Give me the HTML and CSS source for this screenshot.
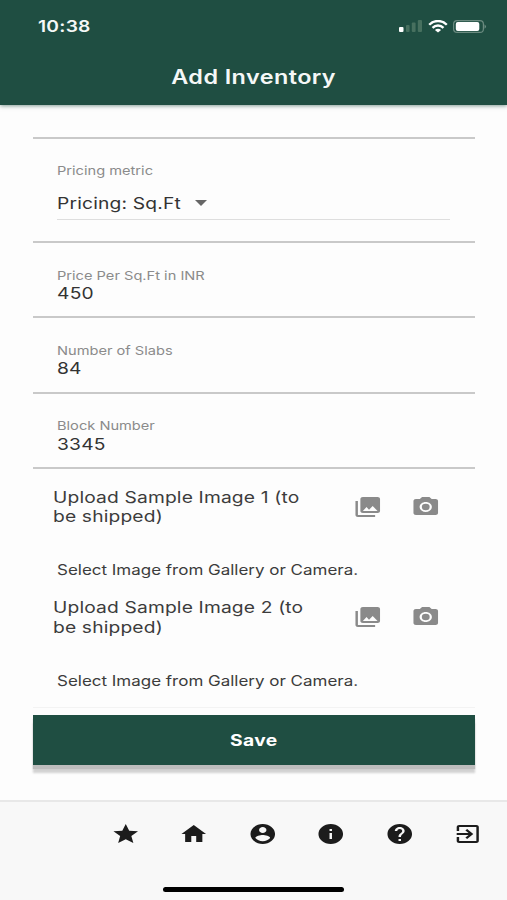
FILE: index.html
```
<!DOCTYPE html>
<html lang="en">
<head>
<meta charset="utf-8">
<title>Add Inventory</title>
<link rel="stylesheet" href="styles.css">
</head>
<body>
<svg width="0" height="0" class="defs" aria-hidden="true">
  <symbol id="gallery" viewBox="0 0 24 24" preserveAspectRatio="none"><path d="M22 16V4c0-1.100-.9-2-2-2H8c-1.100 0-2 .9-2 2v12c0 1.100.9 2 2 2h12c1.100 0 2-.9 2-2zm-11-4l2.030 2.710L16 11l4 5H8l3-4zM2 6v14c0 1.100.9 2 2 2h14v-2H4V6H2z"/></symbol>
  <symbol id="camera" viewBox="0 0 24 24" preserveAspectRatio="none"><circle cx="12" cy="12" r="3.200"/><path d="M9 2L7.170 4H4c-1.100 0-2 .9-2 2v12c0 1.100.9 2 2 2h16c1.100 0 2-.9 2-2V6c0-1.100-.9-2-2-2h-3.170L15 2H9zm3 15c-2.760 0-5-2.240-5-5s2.240-5 5-5 5 2.240 5 5-2.240 5-5 5z"/></symbol>
</svg>
<header class="header">
  <div class="status">
    <span class="time text">10:38</span>
    <div class="indicators">
      <svg class="signal" viewBox="0 0 24 12"><rect x="0" y="7" width="4.500" height="5" rx="1" fill="#fff"/><g fill="#47705f"><rect x="7" y="5" width="3.600" height="7" rx="1"/><rect x="12.800" y="2.500" width="3.800" height="9.500" rx="1"/><rect x="18.800" y="0" width="4.200" height="12" rx="1"/></g></svg>
      <svg class="wifi" viewBox="0 0 20 13" fill="none" stroke="#fff" stroke-width="2.300"><path d="M1.200 4.800C6-.3 14-.3 18.800 4.800M4.500 7.900c3.100-3.200 7.900-3.200 11 0"/><path d="M6.900 9.900Q10 7.600 13.100 9.900L10 12.600z" fill="#fff" stroke="none"/></svg>
      <svg class="battery" viewBox="0 0 34 13"><rect x=".6" y=".6" width="29.800" height="11.800" rx="3.500" fill="none" stroke="#6b8b80" stroke-width="1.200"/><rect x="2.800" y="2" width="23.500" height="9" rx="2" fill="#fff"/><path d="M31.500 4.200q3 2.300 0 4.600z" fill="#6b8b80"/></svg>
    </div>
  </div>
  <h1 class="title"><span class="text">Add Inventory</span></h1>
</header>
<main class="form">
  <section class="metric">
    <label class="label"><span class="text">Pricing metric</span></label>
    <div class="select"><span class="value text">Pricing: Sq.Ft</span><i class="caret"></i></div>
  </section>
  <section class="field"><label class="label"><span class="text">Price Per Sq.Ft in INR</span></label><div class="value"><span class="text">450</span></div></section>
  <section class="field"><label class="label"><span class="text">Number of Slabs</span></label><div class="value"><span class="text">84</span></div></section>
  <section class="field"><label class="label"><span class="text">Block Number</span></label><div class="value"><span class="text">3345</span></div></section>
  <section class="upload">
    <div class="upload-row"><p class="upload-title"><span class="text">Upload Sample Image 1 (to<br>be shipped)</span></p><svg class="icon"><use href="#gallery"/></svg><svg class="icon"><use href="#camera"/></svg></div>
    <p class="hint"><span class="text">Select Image from Gallery or Camera.</span></p>
  </section>
  <section class="upload">
    <div class="upload-row"><p class="upload-title"><span class="text">Upload Sample Image 2 (to<br>be shipped)</span></p><svg class="icon"><use href="#gallery"/></svg><svg class="icon"><use href="#camera"/></svg></div>
    <p class="hint"><span class="text">Select Image from Gallery or Camera.</span></p>
  </section>
  <div class="actions"><button class="save"><span class="text">Save</span></button></div>
</main>
<footer class="footer">
  <nav class="tabs">
    <svg class="icon" viewBox="0 0 24 24" preserveAspectRatio="none"><path d="M12 17.270L18.180 21l-1.640-7.030L22 9.240l-7.190-.61L12 2 9.190 8.630 2 9.240l5.460 4.730L5.820 21z"/></svg>
    <svg class="icon" viewBox="0 0 24 24" preserveAspectRatio="none"><path d="M10 20v-6h4v6h5v-8h3L12 3 2 12h3v8z"/></svg>
    <svg class="icon" viewBox="0 0 24 24" preserveAspectRatio="none"><path d="M12 2C6.480 2 2 6.480 2 12s4.480 10 10 10 10-4.480 10-10S17.520 2 12 2zm0 3c1.660 0 3 1.340 3 3s-1.340 3-3 3-3-1.340-3-3 1.340-3 3-3zm0 14.200c-2.500 0-4.710-1.280-6-3.220.03-1.990 4-3.080 6-3.080 1.990 0 5.970 1.090 6 3.080-1.290 1.940-3.500 3.220-6 3.220z"/></svg>
    <svg class="icon" viewBox="0 0 24 24" preserveAspectRatio="none"><path d="M12 2C6.480 2 2 6.480 2 12s4.480 10 10 10 10-4.480 10-10S17.520 2 12 2zm1 15h-2v-6h2v6zm0-8h-2V7h2v2z"/></svg>
    <svg class="icon" viewBox="0 0 24 24" preserveAspectRatio="none"><path d="M12 2C6.480 2 2 6.480 2 12s4.480 10 10 10 10-4.480 10-10S17.520 2 12 2zm1 17h-2v-2h2v2zm2.070-7.750l-.9.920C13.450 12.900 13 13.500 13 15h-2v-.5c0-1.100.45-2.100 1.170-2.830l1.240-1.260c.37-.36.590-.86.590-1.410 0-1.100-.9-2-2-2s-2 .9-2 2H8c0-2.210 1.790-4 4-4s4 1.790 4 4c0 .88-.36 1.680-.93 2.250z"/></svg>
    <svg class="icon" viewBox="0 0 24 24" preserveAspectRatio="none"><path d="M10.090 15.590L11.500 17l5-5-5-5-1.410 1.410L12.670 11H3v2h9.670l-2.580 2.590zM19 3H5c-1.110 0-2 .9-2 2v4h2V5h14v14H5v-4H3v4c0 1.100.89 2 2 2h14c1.100 0 2-.9 2-2V5c0-1.100-.9-2-2-2z"/></svg>
  </nav>
  <div class="home-bar"></div>
</footer>
</body>
</html>
```
FILE: styles.css
```
* { box-sizing: border-box; }
body {
  margin: 0;
  height: 900px;
  display: flex;
  flex-direction: column;
  overflow: hidden;
  background: #fdfdfd;
  color: #3c3c3c;
  font-family: Inter, "Liberation Sans", sans-serif;
}
p, h1 { margin: 0; }
.defs { display: none; }
.text {
  display: inline-block;
  white-space: nowrap;
  transform: scaleX(1.2);
  transform-origin: left center;
}
.header {
  height: 105px;
  flex: none;
  background: #1f4e42;
  color: #f5f8f7;
  box-shadow: 0 1px 4px rgba(31, 78, 66, .55);
}
.status {
  height: 52px;
  padding: 0 20px 0 38px;
  display: flex;
  align-items: center;
  justify-content: space-between;
}
.time { font-size: 16px; font-weight: 600; letter-spacing: .2px; }
.indicators { display: flex; align-items: center; gap: 5px; }
.signal { width: 24px; height: 12px; }
.wifi { width: 20px; height: 13px; }
.battery { width: 34px; height: 13px; }
.title {
  height: 50px;
  line-height: 51px;
  text-align: center;
  font-size: 19.500px;
  font-weight: 600;
  letter-spacing: .35px;
}
.title .text, .save .text { transform-origin: center; }
.form { width: 442px; margin: 32px 0 0 33px; flex: none; }
.metric, .field { border-bottom: 2px solid #c9c9c9; padding-left: 24px; }
.metric { height: 106px; border-top: 2px solid #c9c9c9; padding-top: 23px; }
.field { height: 75.300px; padding-top: 23px; }
.field .label { padding-top: .5px; }
.label { display: block; height: 18px; line-height: 18px; font-size: 12.200px; color: #8b8b8b; }
.value { height: 19px; line-height: 19px; font-size: 16px; color: #333; letter-spacing: .2px; }
.select {
  width: 393px;
  height: 40px;
  padding-top: 7px;
  display: flex;
  align-items: center;
  border-bottom: 1px solid #dedede;
}
.select .value { width: 138px; letter-spacing: .15px; }
.caret { border: 6px solid transparent; border-top: 6px solid #666; border-bottom: 0; }
.upload { height: 110.500px; }
.upload-row { display: flex; padding: 19px 34.500px 0 19.500px; height: 83.500px; }
.upload-title { flex: 1; font-size: 16px; line-height: 19.300px; letter-spacing: .14px; }
.upload-row .icon { fill: #8a8a8a; margin: 7px 0 0 29px; }
.icon { width: 29.500px; height: 24px; flex: none; fill: #1c1c1c; }
.hint { height: 36px; padding-left: 24px; line-height: 36px; font-size: 14.150px; }
.actions { margin-top: 17px; padding-top: 7px; border-top: 1px solid #f3f3f3; }
.save {
  display: block;
  width: 442px;
  height: 50px;
  padding: 0;
  border: 0;
  background: #1f4e42;
  color: #fff;
  font: 700 16px Inter, "Liberation Sans", sans-serif;
  letter-spacing: .3px;
  box-shadow: 0 4px 1px #bdbdbd, 0 8px 2px #d2d2d2;
}
.footer {
  height: 100px;
  margin-top: auto;
  flex: none;
  border-top: 2px solid #e8e8e8;
  background: #f8f8f8;
  display: flex;
  flex-direction: column;
  align-items: center;
}
.tabs { width: 100%; padding: 20px 24.500px 0 110.500px; display: flex; justify-content: space-between; }
.home-bar { width: 181px; height: 5px; margin-top: 41px; border-radius: 3px; background: #000; }
```
